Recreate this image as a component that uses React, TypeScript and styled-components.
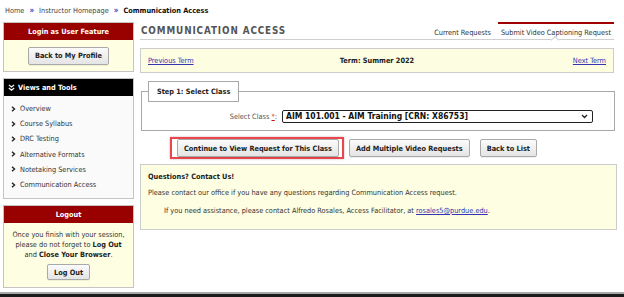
import styled, { createGlobalStyle } from "styled-components";

const Global = createGlobalStyle`
  html, body {
    margin: 0;
    padding: 0;
    background: #fff;
  }
  body {
    font-family: "DejaVu Sans Condensed", "DejaVu Sans", sans-serif;
    font-size: 7.3px;
    color: #333;
  }
`;

const Page = styled.div`
  width: 624px;
  height: 297px;
  display: flex;
  flex-direction: column;
  overflow: hidden;
`;

const Crumbs = styled.div`
  height: 20px;
  display: flex;
  align-items: center;
  gap: 5px;
  padding: 0 0 2px 5px;
  color: #444;
`;

const CrumbSep = styled.span`
  color: #3344cc;
  font-weight: bold;
  font-size: 8px;
`;

const CrumbCurrent = styled.span`
  font-weight: bold;
  color: #111;
`;

const Layout = styled.div`
  flex: 1;
  display: flex;
  gap: 6px;
  padding: 0 7px 0 3px;
`;

const Sidebar = styled.div`
  width: 131px;
  display: flex;
  flex-direction: column;
  gap: 6px;
`;

const Panel = styled.div<{ $bg?: string }>`
  border: 1px solid #c4c4c4;
  background: ${(p) => p.$bg || "#fefee2"};
`;

const PanelHeader = styled.div<{ $tone: string; $left?: boolean }>`
  height: 17px;
  display: flex;
  align-items: center;
  justify-content: ${(p) => (p.$left ? "flex-start" : "center")};
  gap: 3px;
  padding-left: ${(p) => (p.$left ? "4px" : "0")};
  background: ${(p) => p.$tone};
  color: #fff;
  font-weight: bold;
`;

const PanelBody = styled.div<{ $pad?: string; $h?: number }>`
  display: flex;
  flex-direction: column;
  align-items: center;
  justify-content: center;
  text-align: center;
  line-height: 10px;
  padding: ${(p) => p.$pad || "0"};
  height: ${(p) => (p.$h ? `${p.$h}px` : "auto")};
`;

const Button = styled.button<{ $h?: number; $mt?: number }>`
  height: ${(p) => p.$h || 18}px;
  margin-top: ${(p) => p.$mt || 0}px;
  padding: 0 6px;
  font-family: inherit;
  font-size: 7.3px;
  font-weight: bold;
  color: #222;
  background: linear-gradient(#fbfbfb, #e4e4e4);
  border: 1px solid #a9a9a9;
  border-radius: 2px;
  box-shadow: 0 1px 0 rgba(0, 0, 0, 0.06);
`;

const NavList = styled.ul`
  list-style: none;
  margin: 0;
  padding: 5px 0 6px 0;
  background: #fafafa;
`;

const NavItem = styled.li`
  height: 15.2px;
  display: flex;
  align-items: center;
  gap: 4px;
  padding-left: 7px;
  color: #333;
`;

const Main = styled.div`
  flex: 1;
  display: flex;
  flex-direction: column;
`;

const TitleRow = styled.div`
  height: 17px;
  margin-right: 3px;
  display: flex;
  justify-content: space-between;
  align-items: stretch;
  border-bottom: 1px solid #cfcfcf;
`;

const Title = styled.h1`
  margin: 0;
  padding-left: 1px;
  align-self: center;
  font-size: 9.8px;
  letter-spacing: 0.9px;
  color: #555;
`;

const Tabs = styled.div`
  display: flex;
  gap: 4px;
`;

const Tab = styled.div<{ $active?: boolean }>`
  position: relative;
  display: flex;
  align-items: center;
  padding: 2px 3px 0;
  color: #333;
  border-top: 2px solid ${(p) => (p.$active ? "#a00000" : "transparent")};

  ${(p) =>
    p.$active &&
    `
    &::after {
      content: "";
      position: absolute;
      left: 54px;
      bottom: -1px;
      width: 5px;
      height: 5px;
      background: #fff;
      border-left: 1px solid #cfcfcf;
      border-top: 1px solid #cfcfcf;
      transform: translateY(3px) rotate(45deg);
    }
  `}
`;

const TermBar = styled.div`
  margin: 8px 3px 0 0;
  height: 23px;
  display: grid;
  grid-template-columns: 1fr auto 1fr;
  align-items: center;
  padding: 0 7px;
  background: #fdfde2;
  border: 1px solid #cccccc;
`;

const Link = styled.a<{ $right?: boolean }>`
  color: #3434b0;
  text-decoration: underline;
  justify-self: ${(p) => (p.$right ? "end" : "start")};
`;

const Strong = styled.b`
  color: #222;
`;

const Fieldset = styled.fieldset`
  margin: 8px 2px 0 1px;
  padding: 8px 0 7px 0;
  border: 1px solid #a8a8a8;
`;

const Legend = styled.legend`
  margin-left: 6px;
  height: 19px;
  padding: 0 8px;
  display: flex;
  align-items: center;
  background: #fff;
  border: 1px solid #a8a8a8;
  font-weight: bold;
  color: #222;
`;

const FieldRow = styled.div`
  display: flex;
  justify-content: flex-end;
  align-items: center;
  gap: 5px;
  padding-right: 21px;
`;

const Label = styled.span`
  color: #555;
`;

const Req = styled.span`
  color: #d01010;
  text-decoration: underline;
`;

const SelectWrap = styled.div`
  position: relative;
  width: 311px;
`;

const Select = styled.select`
  width: 100%;
  height: 13px;
  padding: 0 0 0 3px;
  appearance: none;
  font-family: inherit;
  font-size: 8.5px;
  font-weight: bold;
  line-height: 11px;
  color: #111;
  background: #fff;
  border: 1px solid #222;
  border-radius: 2px;
`;

const Chevron = styled.svg`
  position: absolute;
  right: 5px;
  top: 4px;
  pointer-events: none;
`;

const ButtonRow = styled.div`
  margin-top: 6px;
  display: flex;
  align-items: center;
  gap: 10px;
  padding-left: 30px;
`;

const Highlight = styled.div`
  margin-right: -5px;
  padding: 0 3px 0 5px;
  display: flex;
  align-items: center;
  border: 2px solid #e8474e;
  box-shadow: 0 0 2px rgba(120, 0, 0, 0.35);
`;

const InfoBox = styled.div`
  margin-top: 5px;
  height: 66px;
  box-sizing: border-box;
  padding: 7px 7px 0;
  background: #fefee2;
  border: 1px solid #cccccc;
  line-height: 10px;
  color: #333;
`;

const InfoLine = styled.p<{ $indent?: number; $gap?: number }>`
  margin: ${(p) => p.$gap || 0}px 0 0 ${(p) => p.$indent || 0}px;
`;

const Footer = styled.div`
  height: 3px;
  border-top: 2px solid #a9a9a9;
  background: #1b1b1b;
`;

function Caret({ down }: { down?: boolean }) {
  return down ? (
    <svg width="7" height="7" viewBox="0 0 8 8">
      <path d="M1 1l3 2.5L7 1M1 4.5l3 2.5 3-2.5" fill="none" stroke="#fff" strokeWidth="1.4" />
    </svg>
  ) : (
    <svg width="5" height="6" viewBox="0 0 5 6">
      <path d="M1 0.8l2.5 2.2L1 5.2" fill="none" stroke="#222" strokeWidth="1.4" />
    </svg>
  );
}

const navItems = [
  "Overview",
  "Course Syllabus",
  "DRC Testing",
  "Alternative Formats",
  "Notetaking Services",
  "Communication Access",
];

export default function App() {
  return (
    <Page>
      <Global />
      <Crumbs>
        <span>Home</span>
        <CrumbSep>»</CrumbSep>
        <span>Instructor Homepage</span>
        <CrumbSep>»</CrumbSep>
        <CrumbCurrent>Communication Access</CrumbCurrent>
      </Crumbs>

      <Layout>
        <Sidebar>
          <Panel>
            <PanelHeader $tone="#990000">Login as User Feature</PanelHeader>
            <PanelBody $h={31}>
              <Button>Back to My Profile</Button>
            </PanelBody>
          </Panel>

          <Panel $bg="#fafafa">
            <PanelHeader $tone="#000" $left>
              <Caret down />
              Views and Tools
            </PanelHeader>
            <NavList>
              {navItems.map((item) => (
                <NavItem key={item}>
                  <Caret />
                  {item}
                </NavItem>
              ))}
            </NavList>
          </Panel>

          <Panel>
            <PanelHeader $tone="#990000">Logout</PanelHeader>
            <PanelBody $pad="7px 0 7px">
              <div>Once you finish with your session,</div>
              <div>
                please do not forget to <Strong>Log Out</Strong>
              </div>
              <div>
                and <Strong>Close Your Browser</Strong>.
              </div>
              <Button $h={16} $mt={4}>
                Log Out
              </Button>
            </PanelBody>
          </Panel>
        </Sidebar>

        <Main>
          <TitleRow>
            <Title>COMMUNICATION ACCESS</Title>
            <Tabs>
              <Tab>Current Requests</Tab>
              <Tab $active>Submit Video Captioning Request</Tab>
            </Tabs>
          </TitleRow>

          <TermBar>
            <Link>Previous Term</Link>
            <Strong>Term: Summer 2022</Strong>
            <Link $right>Next Term</Link>
          </TermBar>

          <Fieldset>
            <Legend>Step 1: Select Class</Legend>
            <FieldRow>
              <Label>
                Select Class <Req>*</Req>:
              </Label>
              <SelectWrap>
                <Select defaultValue="aim">
                  <option value="aim">AIM 101.001 - AIM Training [CRN: X86753]</option>
                </Select>
                <Chevron width="7" height="5" viewBox="0 0 7 5">
                  <path d="M1 1l2.5 2.5L6 1" fill="none" stroke="#222" strokeWidth="1.3" />
                </Chevron>
              </SelectWrap>
            </FieldRow>
          </Fieldset>

          <ButtonRow>
            <Highlight>
              <Button>Continue to View Request for This Class</Button>
            </Highlight>
            <Button>Add Multiple Video Requests</Button>
            <Button>Back to List</Button>
          </ButtonRow>

          <InfoBox>
            <InfoLine>
              <Strong>Questions? Contact Us!</Strong>
            </InfoLine>
            <InfoLine $gap={6}>
              Please contact our office if you have any questions regarding Communication Access request.
            </InfoLine>
            <InfoLine $gap={8} $indent={16}>
              If you need assistance, please contact Alfredo Rosales, Access Facilitator, at{" "}
              <Link>rosales5@purdue.edu</Link>.
            </InfoLine>
          </InfoBox>
        </Main>
      </Layout>

      <Footer />
    </Page>
  );
}
